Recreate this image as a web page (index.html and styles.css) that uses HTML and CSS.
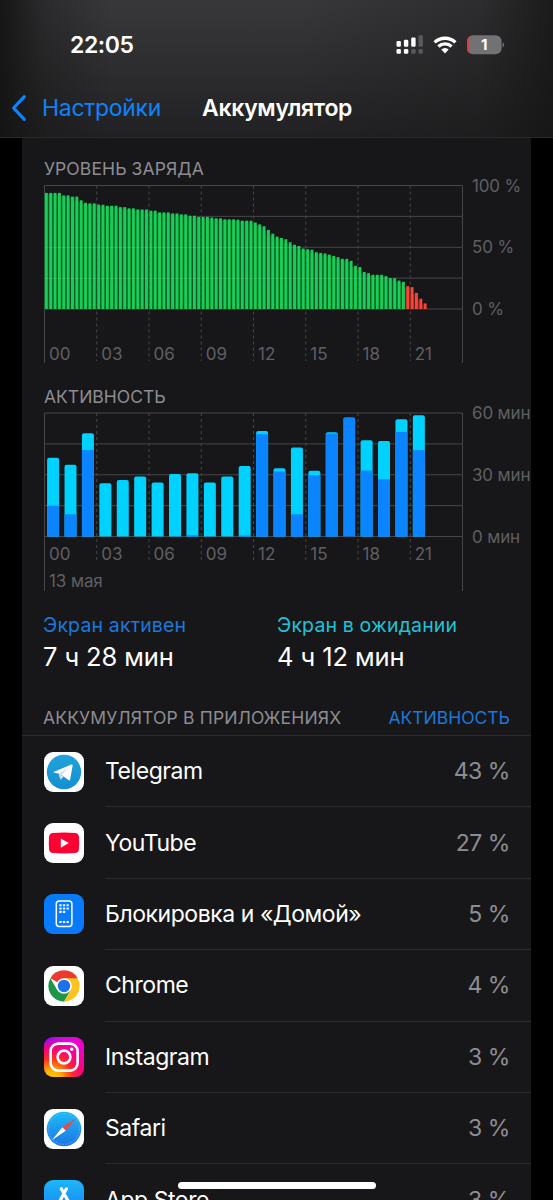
FILE: index.html
```html
<!DOCTYPE html>
<html lang="ru">
<head>
    <meta charset="UTF-8">
    <meta name="viewport" content="width=device-width, initial-scale=1.0">
    <title>Аккумулятор</title>
    <link rel="stylesheet" href="styles.css">
</head>
<body>

    <!-- Header -->
    <header>
        <div class="status-bar">
            <span class="time">22:05</span>
            <div class="status-icons">
                <svg class="signal" width="28" height="20" viewBox="0 0 28 20">
                    <g fill="#fff">
                        <rect x="0.5" y="6" width="4.4" height="5.8" rx="1.3"/>
                        <rect x="7.9" y="4.7" width="4.4" height="7.1" rx="1.3"/>
                        <rect x="15.2" y="2.4" width="4.4" height="9.4" rx="1.3"/>
                        <rect x="0.5" y="14" width="4.4" height="4.8" rx="1.3"/>
                        <rect x="7.9" y="14" width="4.4" height="4.8" rx="1.3"/>
                    </g>
                    <g fill="#59595b">
                        <rect x="22.5" y="0.3" width="4.4" height="11.5" rx="1.3"/>
                        <rect x="15.2" y="14" width="4.4" height="4.8" rx="1.3"/>
                        <rect x="22.5" y="14" width="4.4" height="4.8" rx="1.3"/>
                    </g>
                </svg>
                <svg class="wifi" width="24" height="20" viewBox="0 0 24 20">
                    <g fill="none" stroke="#fff" stroke-width="3.3">
                        <path d="M1.6 7.4a15.1 15.1 0 0 1 20.8 0"/>
                        <path d="M5.4 11.5a9.6 9.6 0 0 1 13.2 0"/>
                    </g>
                    <path d="M12 18.4l-3.7-3.8a5.3 5.3 0 0 1 7.4 0z" fill="#fff"/>
                </svg>
                <svg class="battery" width="37" height="20" viewBox="0 0 37 20">
                    <clipPath id="cell"><rect x="0" y="0.3" width="34.6" height="19" rx="6"/></clipPath>
                    <g clip-path="url(#cell)">
                        <rect width="35" height="20" fill="#727173"/>
                        <rect width="2.4" height="20" fill="#cf4144"/>
                    </g>
                    <path d="M35.6 7.2q1.5 1 1.5 2.7t-1.5 2.7z" fill="#727173"/>
                    <text x="17.2" y="15.4">1</text>
                </svg>
            </div>
        </div>
        <nav>
            <a class="back">
                <svg width="16" height="28" viewBox="0 0 16 28"><path d="M13.3 2.6L2.6 14l10.7 11.4" fill="none" stroke="#0a84ff" stroke-width="3.2" stroke-linecap="round" stroke-linejoin="round"/></svg>
                <span>Настройки</span>
            </a>
            <h1>Аккумулятор</h1>
        </nav>
    </header>

    <!-- Main Content -->
    <main class="card">

        <!-- Charts -->
        <h2 class="level-title">Уровень заряда</h2>
        <svg class="level-chart" id="levelChart" width="487" height="182" viewBox="44 184 487 182"></svg>

        <h2 class="activity-title">Активность</h2>
        <svg class="activity-chart" id="activityChart" width="487" height="182" viewBox="44 411 487 182"></svg>

        <!-- Screen Time Summary -->
        <div class="summary">
            <div>
                <p class="label active">Экран активен</p>
                <p class="value">7 ч 28 мин</p>
            </div>
            <div>
                <p class="label idle">Экран в ожидании</p>
                <p class="value">4 ч 12 мин</p>
            </div>
        </div>

        <!-- App List -->
        <div class="list-header">
            <h2>Аккумулятор в приложениях</h2>
            <a>Активность</a>
        </div>
        <ul class="apps">
            <li>
                <svg class="icon" viewBox="0 0 40 40">
                    <linearGradient id="tg" x2="0" y2="1"><stop stop-color="#22a3dc"/><stop offset="1" stop-color="#128fcf"/></linearGradient>
                    <rect width="40" height="40" rx="9" fill="#fff"/>
                    <circle cx="20" cy="20" r="17.2" fill="url(#tg)"/>
                    <path d="M9 20.2L27.3 12.6q1.6-.5 1.3 1.2L26.2 27.3q-.4 1.7-1.8.8l-8.2-6z" fill="#fff"/>
                    <path d="M14.8 21.7l1.7 6.1 3.1-3.2z" fill="#d2e5f1"/>
                    <path d="M16.5 27.8l.5-4.8 8-7.2-10.2 5.9z" fill="#c5deed"/>
                </svg>
                <div class="row"><span>Telegram</span><b>43 %</b></div>
            </li>
            <li>
                <svg class="icon" viewBox="0 0 40 40">
                    <rect width="40" height="40" rx="9" fill="#fff"/>
                    <path d="M9 9.9q11-.8 22 0 3.5.3 3.9 3.7.6 6.4 0 12.8-.4 3.4-3.9 3.7-11 .8-22 0-3.5-.3-3.9-3.7-.6-6.4 0-12.8.4-3.4 3.9-3.7z" fill="#ff0033"/>
                    <path d="M16.8 15.5v9.2l8-4.6z" fill="#fff"/>
                </svg>
                <div class="row"><span>YouTube</span><b>27 %</b></div>
            </li>
            <li>
                <svg class="icon" viewBox="0 0 40 40">
                    <rect width="40" height="40" rx="9" fill="#087bfd"/>
                    <rect x="12.3" y="6.9" width="15.6" height="25.6" rx="3" fill="none" stroke="#fff" stroke-width="1.5"/>
                    <g fill="#fff">
                        <rect x="15.3" y="10.2" width="2.3" height="2.1" rx=".5"/><rect x="18.9" y="10.2" width="2.3" height="2.1" rx=".5"/><rect x="22.5" y="10.2" width="2.3" height="2.1" rx=".5"/>
                        <rect x="15.3" y="13.5" width="2.3" height="2.1" rx=".5"/><rect x="18.9" y="13.5" width="2.3" height="2.1" rx=".5"/><rect x="22.5" y="13.5" width="2.3" height="2.1" rx=".5"/>
                        <rect x="15.3" y="16.8" width="2.3" height="2.1" rx=".5"/><rect x="18.9" y="16.8" width="2.3" height="2.1" rx=".5"/>
                        <rect x="15.3" y="27" width="2.3" height="2.1" rx=".5"/><rect x="18.9" y="27" width="2.3" height="2.1" rx=".5"/><rect x="22.5" y="27" width="2.3" height="2.1" rx=".5"/>
                    </g>
                </svg>
                <div class="row"><span>Блокировка и «Домой»</span><b>5 %</b></div>
            </li>
            <li>
                <svg class="icon" viewBox="0 0 40 40">
                    <rect width="40" height="40" rx="9" fill="#fff"/>
                    <path d="M20 20L6.4 12.2A15.7 15.7 0 0 1 33.6 12.2z" fill="#ea3b2e"/>
                    <path d="M6.4 12.2A15.7 15.7 0 0 0 20 35.7L26.8 23.9 13.2 23.9z" fill="#1d9645"/>
                    <path d="M33.6 12.2A15.7 15.7 0 0 1 20 35.7L26.8 23.9 20 12.2z" fill="#fcc31e"/>
                    <circle cx="20" cy="20" r="7.8" fill="#fff"/>
                    <circle cx="20" cy="20" r="6.2" fill="#1a73e8"/>
                </svg>
                <div class="row"><span>Chrome</span><b>4 %</b></div>
            </li>
            <li>
                <svg class="icon" viewBox="0 0 40 40">
                    <linearGradient id="igTop"><stop stop-color="#7a10ff"/><stop offset=".5" stop-color="#d907e4"/><stop offset="1" stop-color="#f200c8"/></linearGradient>
                    <radialGradient id="igBottom" cx=".2" cy="1.05" r="1.05"><stop stop-color="#ffd000"/><stop offset=".22" stop-color="#ffae00"/><stop offset=".5" stop-color="#ff2a28"/><stop offset=".75" stop-color="#ff0078" stop-opacity=".9"/><stop offset="1" stop-color="#ff0090" stop-opacity="0"/></radialGradient>
                    <rect width="40" height="40" rx="9" fill="url(#igTop)"/>
                    <rect width="40" height="40" rx="9" fill="url(#igBottom)"/>
                    <rect x="6.6" y="6.6" width="27" height="27" rx="7.5" fill="none" stroke="#fff" stroke-width="2.6"/>
                    <circle cx="20" cy="20" r="6.4" fill="none" stroke="#fff" stroke-width="2.6"/>
                    <circle cx="27.7" cy="12.3" r="1.7" fill="#fff"/>
                </svg>
                <div class="row"><span>Instagram</span><b>3 %</b></div>
            </li>
            <li>
                <svg class="icon" viewBox="0 0 40 40">
                    <linearGradient id="sf" x2="0" y2="1"><stop stop-color="#1fbcf6"/><stop offset="1" stop-color="#1c73e4"/></linearGradient>
                    <rect width="40" height="40" rx="9" fill="#fff"/>
                    <circle cx="20" cy="20" r="17.3" fill="url(#sf)"/>
                    <circle cx="20" cy="20" r="15.4" fill="none" stroke="#8fcbf5" stroke-width="1.2" stroke-dasharray=".5 1.1" stroke-opacity=".7"/>
                    <path d="M32.5 8.8L18.4 18.2 21.7 21.8z" fill="#ee4848"/>
                    <path d="M7.8 31.2L18.4 18.2 21.7 21.8z" fill="#fff"/>
                </svg>
                <div class="row"><span>Safari</span><b>3 %</b></div>
            </li>
            <li>
                <svg class="icon" viewBox="0 0 40 40">
                    <linearGradient id="as" x2="0" y2="1"><stop stop-color="#1bb8fa"/><stop offset="1" stop-color="#1c72f0"/></linearGradient>
                    <rect width="40" height="40" rx="9" fill="url(#as)"/>
                    <path d="M22.4 8.8L11.5 29M17.4 8.8L28.5 29M8 24.5h14M27 24.5h5" fill="none" stroke="#fff" stroke-width="3.2" stroke-linecap="round"/>
                </svg>
                <div class="row"><span>App Store</span><b>3 %</b></div>
            </li>
        </ul>
    </main>

    <div class="home-indicator"></div>

    <script src="script.js"></script>
</body>
</html>
```

FILE: styles.css
```css
/* Global Styles */
* {
    box-sizing: border-box;
}

body {
    margin: 0;
    height: 1200px;
    overflow: hidden;
    position: relative;
    background-color: #000;
    color: #fff;
    font-family: Inter, "Liberation Sans", sans-serif;
}

h1, h2, p, ul {
    margin: 0;
    padding: 0;
    font-weight: 400;
}

svg {
    display: block;
    flex: none;
}

/* Header */
header {
    height: 138px;
    padding-top: 25px;
    border-bottom: 1px solid #29292b;
    background: linear-gradient(90deg, rgba(20, 20, 20, 0.95) 0, rgba(20, 20, 20, 0.35) 45px, rgba(20, 20, 20, 0) 110px, rgba(20, 20, 20, 0) 300px, rgba(20, 20, 20, 0.3) 480px, rgba(20, 20, 20, 0.8) 553px),
        linear-gradient(#38383b, #2d2d2f 50%, #212123);
}

.status-bar {
    display: flex;
    justify-content: space-between;
    align-items: center;
    height: 40px;
    padding: 0 49px 0 70px;
}

.time {
    font-size: 23px;
    font-weight: 600;
    letter-spacing: -0.4px;
}

.status-icons {
    display: flex;
    align-items: center;
}

.wifi {
    margin: 0 10px 0 9px;
}

.battery text {
    font-size: 15px;
    font-weight: 700;
    fill: #fff;
    text-anchor: middle;
}

nav {
    display: flex;
    align-items: center;
    height: 34px;
    margin-top: 26px;
    padding-left: 11px;
}

.back {
    display: flex;
    align-items: center;
    gap: 15px;
    width: 191px;
    font-size: 23px;
    color: #0a84ff;
    letter-spacing: -0.3px;
}

nav h1 {
    font-size: 23px;
    font-weight: 600;
    letter-spacing: -0.3px;
}

/* Card */
.card {
    margin: 0 22px;
    padding-top: 20px;
    overflow: hidden;
    background-color: #171719;
}

.card h2 {
    font-size: 17.5px;
    line-height: 22px;
    letter-spacing: 0.1px;
    color: #8d8d93;
    text-transform: uppercase;
}

.card > h2, .card > svg {
    margin-left: 22px;
}

.card .level-title {
    margin-bottom: 4px;
}

.card .activity-title {
    margin-top: 20px;
    margin-bottom: 3px;
    letter-spacing: 0;
}

/* Charts */
.level-chart, .activity-chart {
    overflow: visible;
}

.grid {
    stroke: #47474a;
    stroke-width: 1;
    fill: none;
}

.dashed {
    stroke-dasharray: 3 3;
}

.axis {
    font-size: 17px;
    fill: #5f5f63;
}

.unit {
    letter-spacing: -0.15px;
}

.date {
    letter-spacing: -0.1px;
}

.bar-ok {
    fill: #1ccb59;
}

.bar-gap {
    fill: #066423;
}

.bar-low {
    fill: #fb4336;
}

.bar-low-gap {
    fill: #7c201c;
}

.overlay {
    fill: none;
    stroke: #0b5a24;
    stroke-opacity: 0.6;
}

.overlay-line {
    fill: none;
    stroke: #fff;
    stroke-opacity: 0.1;
}

.bar-active {
    fill: #0a84ff;
}

.bar-idle {
    fill: #00d2ff;
}

/* Screen Time Summary */
.summary {
    display: grid;
    grid-template-columns: 234px 1fr;
    margin-top: 19px;
    padding-left: 21px;
}

.summary .label {
    font-size: 19.5px;
    line-height: 26px;
    letter-spacing: 0.15px;
}

.summary .active {
    color: #1b78dc;
}

.summary .idle {
    color: #20c3d8;
}

.summary .value {
    font-size: 25.5px;
    line-height: 37px;
    letter-spacing: -0.1px;
}

/* App List */
.list-header {
    display: flex;
    justify-content: space-between;
    align-items: center;
    height: 61px;
    padding: 25px 21px 0;
    border-bottom: 1px solid #2c2c2e;
}

.list-header h2 {
    letter-spacing: 0.17px;
}

.list-header a {
    font-size: 17.5px;
    line-height: 22px;
    text-transform: uppercase;
    color: #1b78dc;
}

.apps {
    list-style: none;
}

.apps li {
    display: flex;
    align-items: center;
    height: 71.4px;
    padding-left: 22px;
}

.icon {
    width: 40px;
    height: 40px;
}

.row {
    flex: 1;
    display: flex;
    justify-content: space-between;
    align-items: center;
    height: 100%;
    margin-left: 21px;
    padding-right: 21px;
    border-bottom: 1px solid #2c2c2e;
    font-size: 23px;
    letter-spacing: -0.45px;
}

.row b {
    font-weight: 400;
    color: #8d8d93;
}

/* Home Indicator */
.home-indicator {
    position: absolute;
    left: 178px;
    bottom: 11px;
    width: 198px;
    height: 7px;
    border-radius: 4px;
    background-color: #fff;
}
```

FILE: script.js
```javascript
const LEFT = 44.5;
const RIGHT = 462.5;
const HOUR = (RIGHT - LEFT) / 24;

// Battery level, one value per 15 minutes
const levels = [
    94, 94, 94, 94, 92, 92, 91, 91, 88, 86, 85.5, 85.5,
    84.6, 84.4, 83.6, 83.6, 83.6, 82.5, 82.5, 81.5, 81.5, 80.6, 80.6, 80.6,
    79.6, 79.6, 78.2, 78.2, 78.2, 77.4, 77.4, 76.6, 76.6, 75.5, 75.5, 74.5,
    74.5, 74.5, 74, 73.4, 73.4, 72.6, 72.6, 72.6, 72.3, 71.5, 71.5, 71.5,
    70, 68.5, 67, 64, 61, 58.6, 57.5, 56.5, 54, 52, 51, 49,
    48.4, 48, 46, 45.4, 45, 44, 43, 42, 40.6, 40.6, 39, 35,
    34, 30, 29, 27.7, 27.7, 27.7, 26.6, 25, 25, 23, 22, 18.5,
    17.7, 13, 8.3, 4.5
];

// Minutes per hour: [total, screen active]
const activity = [
    [38.2, 14.9], [34.8, 10.8], [50.2, 42], [25.9, 0], [27.5, 0], [29.1, 0],
    [26.2, 0], [30.4, 0], [30.7, 0.6], [26.2, 0], [29.1, 0], [34.3, 0.5],
    [51.3, 49.7], [33.2, 31.6], [43.2, 10.8], [32, 29.8], [50.6, 50], [57.9, 57.9],
    [46.8, 32], [46.4, 27.8], [57, 50.8], [58.9, 42]
];

function rect(cls, x, y, w, h) {
    return `<rect class="${cls}" x="${x}" y="${y}" width="${w}" height="${h}"/>`;
}

function path(cls, d) {
    return `<path class="${cls}" d="${d}"/>`;
}

function gridLines(top, bottom, lineEnd, dashEnd, labelY, unit, marks) {
    let d = "";
    for (let i = 0; i <= 4; i++) {
        d += `M${LEFT} ${top + (bottom - top) * i / 4}H${RIGHT}`;
    }
    d += `M${LEFT} ${top}V${lineEnd}M${RIGHT} ${top}V${lineEnd}`;
    let out = path("grid", d);
    for (let h = 0; h < 24; h += 3) {
        const x = LEFT + h * HOUR;
        if (h > 0) out += path("grid dashed", `M${x} ${top}V${dashEnd}`);
        out += `<text class="axis" x="${x + 4.5}" y="${labelY}">${String(h).padStart(2, "0")}</text>`;
    }
    marks.forEach((m, i) => {
        out += `<text class="axis unit" x="472" y="${top + (bottom - top) * i / 2 + 6}">${m} ${unit}</text>`;
    });
    return out;
}

function drawLevel() {
    const top = 185.5, bottom = 309;
    const step = HOUR / 4;
    let out = gridLines(top, bottom, 363, 361, 360, "%", [100, 50, 0]);
    levels.forEach((v, i) => {
        const h = (bottom - top) * v / 100;
        const x = LEFT + i * step;
        const low = v < 20;
        const next = levels[i + 1];
        if (next) {
            const nh = (bottom - top) * next / 100 - 1;
            out += rect(low ? "bar-low-gap" : "bar-gap", x, bottom - nh, step, nh);
        }
        out += rect(low ? "bar-low" : "bar-ok", x + 0.4, bottom - h, 2.9, h);
    });
    // grid showing faintly through the bars
    for (let h = 3; h < 24; h += 3) {
        const y = bottom - (bottom - top) * levels[h * 4] / 100;
        out += path("overlay dashed", `M${LEFT + h * HOUR} ${y}V${bottom}`);
    }
    out += path("overlay-line", `M${LEFT} 247.5H300M${LEFT} 278.5H390`);
    document.getElementById("levelChart").innerHTML = out;
}

function drawActivity() {
    const top = 413, bottom = 536.5;
    let out = gridLines(top, bottom, 591, 561, 560, "мин", [60, 30, 0]);
    const scale = (bottom - top) / 60;
    activity.forEach(([total, active], i) => {
        const x = LEFT + 2.6 + i * HOUR;
        const y = bottom - total * scale;
        const cls = active === total ? "bar-active" : "bar-idle";
        out += path(cls, `M${x} ${bottom}V${y + 2}q0-2 2-2h8q2 0 2 2V${bottom}z`);
        if (active && active !== total) {
            out += rect("bar-active", x, bottom - active * scale, 12, active * scale);
        }
    });
    out += `<text class="axis date" x="49" y="587">13 мая</text>`;
    document.getElementById("activityChart").innerHTML = out;
}

drawLevel();
drawActivity();
```
